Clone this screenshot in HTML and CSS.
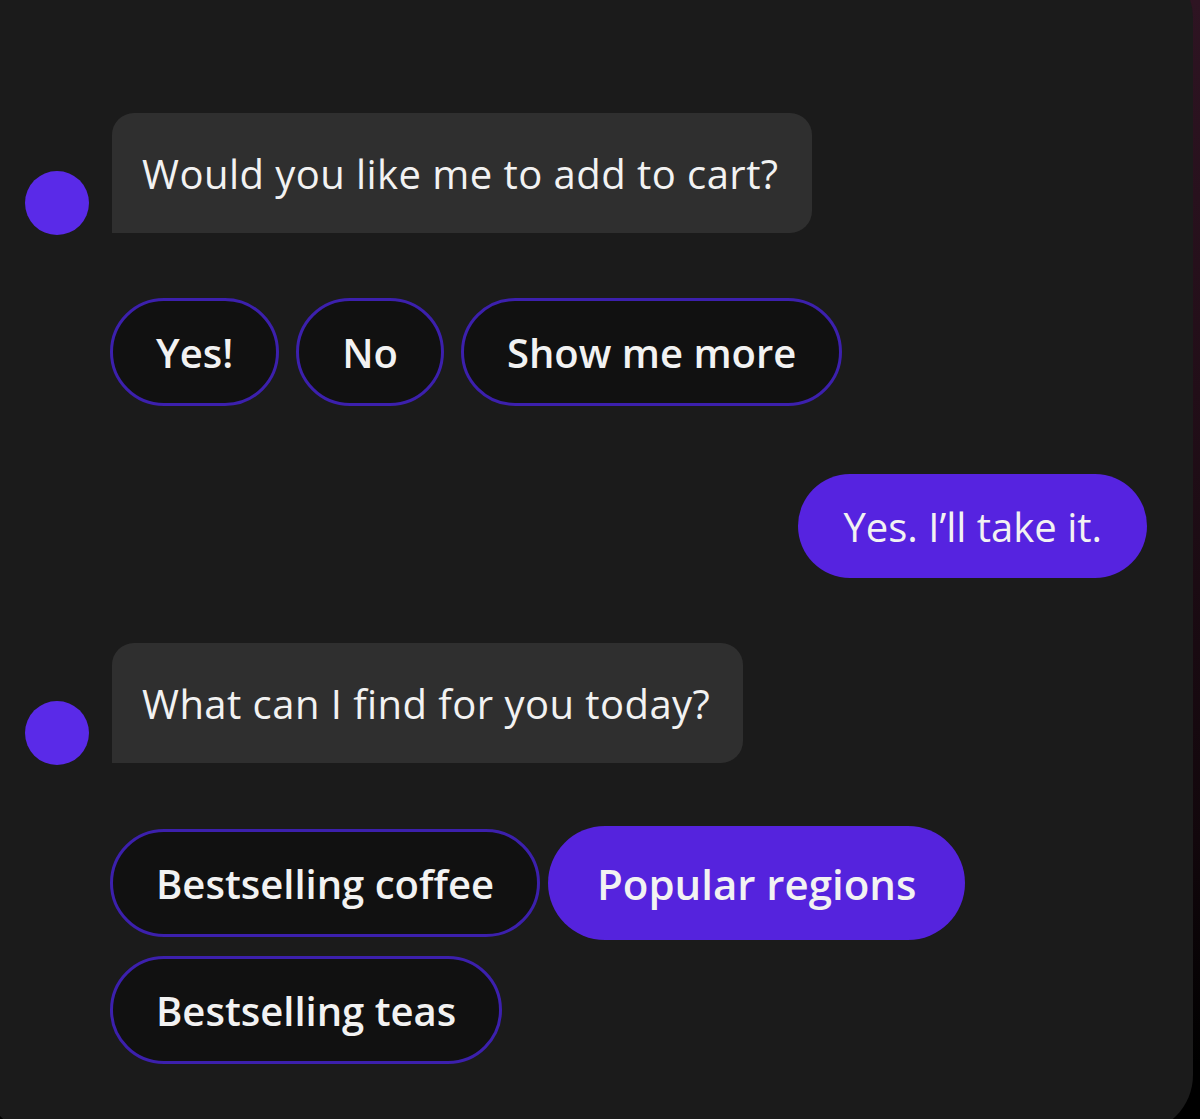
FILE: index.html
```html
<!DOCTYPE html>
<html>
<head>
<meta charset="utf-8">
<link rel="stylesheet" href="styles.css">
</head>
<body>
<div class="card">
  <div class="bot-row">
    <div class="avatar"></div>
    <div class="bubble">Would you like me to add to cart?</div>
  </div>
  <div class="chips chips-1">
    <div class="chip">Yes!</div>
    <div class="chip">No</div>
    <div class="chip">Show me more</div>
  </div>
  <div class="user-row">
    <div class="user-bubble">Yes. I’ll take it.</div>
  </div>
  <div class="bot-row bot-row-2">
    <div class="avatar"></div>
    <div class="bubble">What can I find for you today?</div>
  </div>
  <div class="chips chips-2">
    <div class="chip">Bestselling coffee</div>
    <div class="chip chip-active">Popular regions</div>
    <div class="chip">Bestselling teas</div>
  </div>
</div>
</body>
</html>
```

FILE: styles.css
```css
html, body {
  margin: 0;
  padding: 0;
  height: 1119px;
  overflow: hidden;
}
body {
  background: linear-gradient(180deg, #2e1422 0%, #220e18 35%, #12070c 75%, #000 95%);
  font-family: "Open Sans", Lato, sans-serif;
  color: #f2f2f2;
}
.card {
  box-sizing: border-box;
  margin-left: -17px;
  margin-top: -40px;
  width: 1210px;
  height: 1173px;
  background: #1b1b1b;
  border-radius: 58px;
  padding: 153px 46px 0 42px;
  display: flex;
  flex-direction: column;
}
.bot-row {
  display: flex;
  align-items: flex-end;
  gap: 23px;
}
.avatar {
  width: 64px;
  height: 64px;
  border-radius: 50%;
  background: #5a2ae8;
  flex: none;
  margin-bottom: -2px;
}
.bubble {
  background: #2f2f2f;
  border-radius: 22px 22px 22px 0;
  height: 120px;
  box-sizing: border-box;
  padding: 0 33px 0 30px;
  display: flex;
  align-items: center;
  font-size: 40px;
  letter-spacing: 0.45px;
}
.chips {
  display: flex;
  flex-wrap: wrap;
  align-items: center;
  margin-left: 85px;
  column-gap: 17px;
  row-gap: 16px;
}
.chips-1 {
  margin-top: 65px;
}
.chips-2 {
  margin-top: 63px;
  width: 880px;
  column-gap: 8px;
}
.chip {
  box-sizing: border-box;
  height: 108px;
  border: 3px solid #3c20ad;
  border-radius: 54px;
  background: #111111;
  padding: 0 43px;
  display: flex;
  align-items: center;
  font-size: 40px;
  font-weight: 600;
}
.chip-active {
  height: 114px;
  border: none;
  border-radius: 57px;
  background: #5523dd;
  padding: 0 49px;
  font-size: 42px;
}
.user-row {
  display: flex;
  justify-content: flex-end;
  margin-top: 68px;
}
.user-bubble {
  height: 104px;
  box-sizing: border-box;
  border-radius: 52px;
  background: #5623e0;
  padding: 0 45px;
  display: flex;
  align-items: center;
  font-size: 40px;
}
.bot-row-2 {
  margin-top: 65px;
}
```
